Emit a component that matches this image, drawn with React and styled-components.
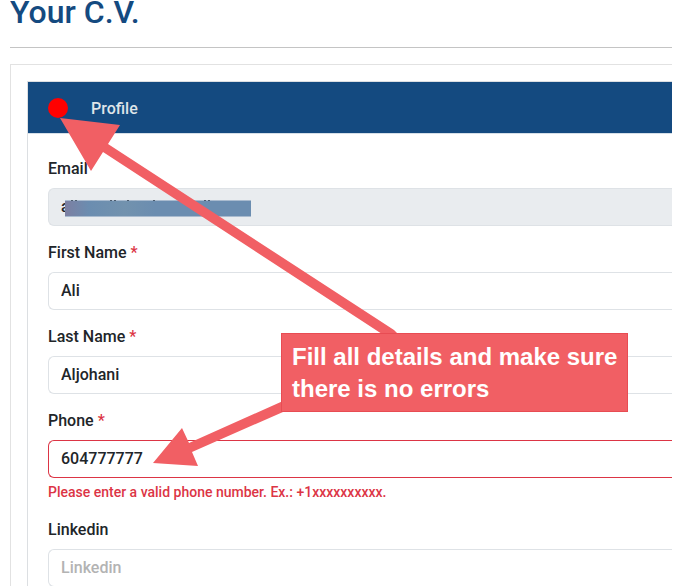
import React from "react";
import styled, { createGlobalStyle } from "styled-components";

const GlobalStyle = createGlobalStyle`
  *, *::before, *::after { box-sizing: border-box; }
  body {
    margin: 0;
    background: #fff;
    color: #212529;
    font: 500 16px/24px Roboto, "Liberation Sans", sans-serif;
  }
`;

const Page = styled.main`
  position: relative;
  height: 100vh;
  padding: 0 1px 1px 10px;
  overflow: hidden;
`;

const Content = styled.div`
  height: 100%;
  overflow: hidden;
`;

const Title = styled.h1`
  margin: 0;
  color: #144a80;
  font-size: 32px;
  font-weight: 500;
  line-height: 24px;
`;

const Divider = styled.hr`
  margin: 23px 0 16px;
  border: 0;
  border-top: 1px solid #c4c4c4;
`;

const Panel = styled.div`
  padding: 16px 0 16px 16px;
  border: 1px solid #e2e2e2;
  border-right: 0;
`;

const Card = styled.section`
  border: 1px solid #dcdfe2;
  border-right: 0;
`;

const CardHeader = styled.header`
  display: flex;
  align-items: center;
  gap: 23px;
  height: 52px;
  padding: 0 20px;
  border-bottom: 1px solid #d5dfe8;
  background: #144a80;
`;

const StatusDot = styled.span`
  width: 20px;
  height: 20px;
  border-radius: 50%;
  background: #f00;
`;

const CardTitle = styled.h2`
  margin: 0;
  padding-top: 2px;
  color: #dfe4e8;
  font-size: 16px;
  font-weight: 500;
`;

const Form = styled.form`
  display: flex;
  flex-direction: column;
  gap: 15px;
  padding: 23px 0 23px 20px;
`;

const Field = styled.div`
  display: flex;
  flex-direction: column;
`;

const Label = styled.label`
  margin-bottom: 7px;
`;

const Required = styled.span`
  color: #dc3545;
`;

const Input = styled.input`
  width: 100%;
  height: 38px;
  padding: 5px 12px 7px;
  border: 1px solid ${(p) => (p.$invalid ? "#dc3545" : "#dee2e6")};
  border-right: 0;
  border-radius: 6px 0 0 6px;
  background: #fff;
  color: #212529;
  font: inherit;
  outline: none;

  &:disabled { background: #e9ecef; color: #212529; }
  &::placeholder { color: #b3b3b3; opacity: 1; }
`;

const ErrorText = styled.p`
  margin: 4px 0 0;
  color: #dc3545;
  font-size: 14px;
  line-height: 21px;
`;

const Redaction = styled.div`
  position: absolute;
  top: 200px;
  left: 65px;
  width: 186px;
  height: 17px;
  border: solid #a9bbcf;
  border-width: 1px 0;
  background: linear-gradient(90deg, #7c7fa2 0, #6b8db0 24px, #7292ae 60px, #6b8db0 90px);
`;

const Arrows = styled.svg`
  position: absolute;
  top: 0;
  left: 0;
  pointer-events: none;
`;

const Callout = styled.aside`
  position: absolute;
  top: 333px;
  left: 281px;
  padding: 7px 10px 6px;
  border: 1px solid #e84c53;
  background: #f15f64;
  color: #fff;
  font: 700 24px/32px "Liberation Sans", Arial, sans-serif;
  white-space: nowrap;
`;

const fields = [
  { id: "email", label: "Email", type: "text", value: "a", disabled: true },
  { id: "first", label: "First Name", type: "text", value: "Ali", required: true },
  { id: "last", label: "Last Name", type: "text", value: "Aljohani", required: true },
  {
    id: "phone",
    label: "Phone",
    type: "tel",
    value: "604777777",
    required: true,
    error: "Please enter a valid phone number. Ex.: +1xxxxxxxxxx.",
  },
  { id: "linkedin", label: "Linkedin", type: "text", value: "", placeholder: "Linkedin" },
];

function FormField({ id, label, type, value, required, disabled, placeholder, error }) {
  return (
    <Field>
      <Label htmlFor={id}>
        {label}
        {required && <Required> *</Required>}
      </Label>
      <Input
        id={id}
        type={type}
        defaultValue={value}
        disabled={disabled}
        placeholder={placeholder}
        aria-invalid={error ? true : undefined}
        aria-describedby={error ? `${id}-error` : undefined}
        $invalid={Boolean(error)}
      />
      {error && <ErrorText id={`${id}-error`}>{error}</ErrorText>}
    </Field>
  );
}

export default function App() {
  return (
    <>
      <GlobalStyle />
      <Page>
        <Content>
          <Title>Your C.V.</Title>
          <Divider />
          <Panel>
            <Card>
              <CardHeader>
                <StatusDot />
                <CardTitle>Profile</CardTitle>
              </CardHeader>
              <Form>
                {fields.map((field) => (
                  <FormField key={field.id} {...field} />
                ))}
              </Form>
            </Card>
          </Panel>
        </Content>
        <Redaction />
        <Arrows width="673" height="587" viewBox="0 0 673 587" aria-hidden="true">
          <path
            d="M71 200.500h2M75 200.500h2M110 200.500h2M114 200.500h2M127 200.500h2M153 200.500h2M204 200.500h2M208 200.500h2"
            stroke="#4c5c6e"
          />
          <path
            fill="#f15f64"
            d="M60 118L120 125L108 144L394 330L398 334H382L103 152L91 171Z"
          />
          <path fill="#f15f64" d="M153 463L182 428L189 443L283 401V412L192 452L198 466Z" />
        </Arrows>
        <Callout>
          Fill all details and make sure
          <br />
          there is no errors
        </Callout>
      </Page>
    </>
  );
}
